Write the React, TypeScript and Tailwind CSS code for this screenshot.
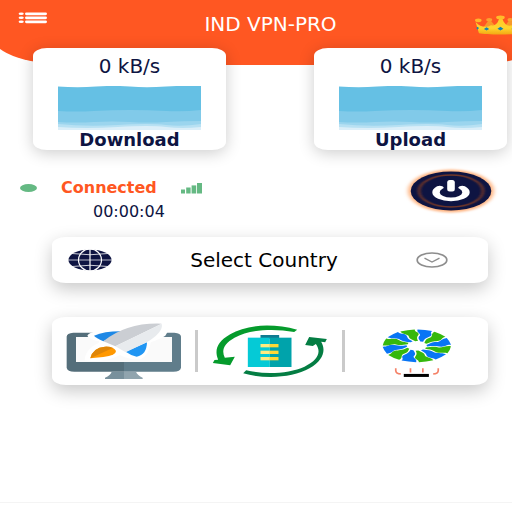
import type { ReactNode } from 'react';

const FONT = "font-['DejaVu_Sans',Verdana,sans-serif]";

function MenuIcon() {
  return (
    <svg viewBox="0 0 30 12" className="h-3 w-[30px]" fill="#fff">
      {[1.8, 5.8, 9.8].map((y) => (
        <g key={y}>
          <ellipse cx="3.2" cy={y} rx="2.6" ry="1.3" />
          <rect x="7" y={y - 1.4} width="22" height="2.8" rx="1.4" />
        </g>
      ))}
    </svg>
  );
}

function CrownIcon() {
  return (
    <svg viewBox="650 40 130 66" className="h-[22px] w-[43px]">
      <defs>
        <linearGradient id="gold" x1="0" y1="0" x2="0" y2="1">
          <stop offset="0" stopColor="#ffc928" />
          <stop offset="0.6" stopColor="#ffd42d" />
          <stop offset="1" stopColor="#f2a913" />
        </linearGradient>
      </defs>
      <path d="M684 82 L700 60 L718 82Z M746 82 L762 60 L780 82Z" fill="#f79a2b" stroke="#f79a2b" strokeWidth="6" />
      <ellipse cx="699" cy="57" rx="9" ry="5" fill="#fba12e" />
      <ellipse cx="763" cy="57" rx="9" ry="5" fill="#fba12e" />
      <path
        d="M658 64 C672 80 690 82 704 74 C716 76 724 70 729 54 L739 54 C744 70 754 78 766 74 C778 82 792 80 808 64 L800 98 C770 103 690 103 668 98 Z"
        fill="url(#gold)"
      />
      <ellipse cx="666" cy="59" rx="10" ry="6" fill="#ffb52b" />
      <ellipse cx="733" cy="50" rx="13" ry="6" fill="#ffbc2a" />
      <path d="M683 85 l8 -5 8 5 -8 5z M724 84 l9 -6 9 6 -9 6z M766 85 l8 -5 8 5 -8 5z M660 82 l4 -4 4 4 -4 5z" fill="#1583b5" />
    </svg>
  );
}

function WaveChart() {
  return (
    <svg viewBox="0 0 143 44" preserveAspectRatio="none" className="block h-11 w-full">
      <path d="M0 0.6 Q20 2 38 0.6 T72 0.6 T108 0.6 T143 0 V44 H0Z" fill="#65c0e4" />
      <path d="M0 25 Q18 26 36 25 T72 24 T108 25 T143 24 V44 H0Z" fill="#81cae9" />
      <path d="M0 36 Q18 37 36 36 T72 36 T108 36 T143 35 V44 H0Z" fill="#9bd5ee" />
      <path d="M0 38 Q28 41 60 39 T108 39 T143 38 V44 H0Z" fill="#b8e1f3" />
      <path d="M0 41 Q28 43 60 41 T108 41 T143 41 V44 H0Z" fill="#dceff9" />
    </svg>
  );
}

function SignalIcon() {
  return (
    <svg viewBox="0 0 21 11" className="h-[11px] w-[21px]" fill="#65b983">
      <rect x="0" y="6.5" width="4" height="4" />
      <rect x="5.2" y="4.5" width="4.4" height="6" />
      <rect x="10.6" y="2.4" width="4.6" height="8.1" />
      <rect x="16" y="0" width="5" height="10.5" />
    </svg>
  );
}

function PowerIcon() {
  return (
    <svg viewBox="0 0 98 50" className="block h-[50px] w-[98px]">
      <defs>
        <filter id="glow" x="-20%" y="-20%" width="140%" height="140%">
          <feGaussianBlur stdDeviation="2 1.3" />
        </filter>
        <filter id="ring">
          <feGaussianBlur stdDeviation="0.7 0.4" />
        </filter>
      </defs>
      <ellipse cx="49" cy="25" rx="43" ry="21.5" fill="#ffb480" filter="url(#glow)" />
      <ellipse cx="49" cy="25" rx="40.3" ry="19.5" fill="#0e1442" />
      <g transform="translate(49 25) scale(2 1)">
        <circle r="16" fill="none" stroke="#713628" strokeWidth="1.3" filter="url(#ring)" />
        <path d="M-5.6 -4.4 A7.5 7.1 0 1 0 5.6 -4.4" transform="translate(0 1)" fill="none" stroke="#fff" strokeWidth="3.7" strokeLinecap="round" />
      </g>
      <rect x="45.2" y="14" width="7.6" height="11.5" rx="2.5" fill="#fff" />
    </svg>
  );
}

function GlobeIcon() {
  return (
    <svg viewBox="0 0 44 22" className="h-[22px] w-11">
      <ellipse cx="22" cy="11" rx="21.6" ry="10.6" fill="#0e1442" />
      <g fill="none" stroke="#fff">
        <ellipse cx="22" cy="11" rx="11.5" ry="11" strokeWidth="1.2" />
        <path d="M22 0V22" strokeWidth="1.2" />
        <path d="M0 11H44" strokeWidth="0.7" />
        <path d="M4 4.5Q22 7 40 4.5M4 17.5Q22 15 40 17.5" strokeWidth="0.8" />
      </g>
    </svg>
  );
}

function ChevronIcon() {
  return (
    <svg viewBox="0 0 32 16" className="h-4 w-8" fill="none" stroke="#8d8d8d">
      <ellipse cx="16" cy="8" rx="14.8" ry="7" strokeWidth="1.7" />
      <path d="M8.5 6.2L16 10L23.5 6.2" strokeWidth="1.4" />
    </svg>
  );
}

function BoostIcon() {
  return (
    <svg viewBox="78 48 348 180" className="h-[60px] w-[116px]">
      <path d="M252 83H100Q80 84 80 95V188Q82 200 103 200H252Z" fill="#546e7a" />
      <path d="M252 83H403Q423 84 423 95V188Q421 200 400 200H252Z" fill="#607d8b" />
      <rect x="108" y="96" width="288" height="75" fill="#fafafa" />
      <path d="M215 200H252V222H195V218Q212 211 215 200Z" fill="#78909c" />
      <path d="M252 200H288Q292 211 308 218V222H252Z" fill="#90a4ae" />
      <path
        d="M142 92Q150 76 245 70Q315 42 380 50Q392 70 376 92Q360 102 332 112Q328 150 302 163Q270 166 240 150Q195 173 134 166Q134 140 160 122Q180 113 177 109Q145 102 142 92Z"
        fill="#fff"
      />
      <path d="M162 92Q195 78 248 79L190 109Q168 99 162 92Z" fill="#1e88e5" />
      <path d="M257 140L321 112Q320 150 290 155Q274 152 257 140Z" fill="#2196f3" />
      <path d="M190 109Q260 52 365 56L226 124Z" fill="#cbced3" />
      <path d="M226 124L365 56Q372 80 320 112L257 142Z" fill="#e8ebee" />
      <path d="M151 160Q158 128 195 125Q222 124 228 138Q228 152 190 156Z" fill="#ff9800" />
      <path d="M151 160Q158 128 195 125Q207 124 218 129Z" fill="#df8608" />
    </svg>
  );
}

function CleanIcon() {
  return (
    <svg viewBox="65 57 350 165" className="h-[55px] w-[117px]">
      <path
        d="M323 74L314 81C250 69 180 74 135 98C103 116 95 136 106 158L136 155L122 181L70 174L75 165L86 164C75 138 80 112 122 88C170 58 250 54 323 74Z"
        fill="#059b2c"
      />
      <path
        d="M161 205L170 196C230 210 300 205 345 185C387 165 396 140 379 117L370 123L347 120L359 96L412 102L407 112L395 110C410 135 402 165 360 190C310 219 225 223 161 205Z"
        fill="#047d43"
      />
      <rect x="213" y="90" width="56" height="12" fill="#0f7b91" />
      <rect x="175" y="98" width="66" height="88" fill="#05cad6" />
      <rect x="241" y="98" width="65" height="88" fill="#00a3ab" />
      {[117, 137, 156].map((y) => (
        <g key={y}>
          <rect x="213" y={y} width="28" height="10" fill="#ffec80" />
          <rect x="241" y={y} width="26" height="10" fill="#fdd835" />
        </g>
      ))}
    </svg>
  );
}

// one curved blade of the fan, pointing up before it is rotated
const BLADE = 'M1 -49 Q12 -48 22 -44 C18 -38 23 -35 20 -29 C16 -24 12 -24 9 -12 L5 -13 C3 -20 1 -24 4 -30 C7 -36 -1 -40 1 -49Z';

function CoolerIcon() {
  return (
    <svg viewBox="100 61 260 155" className="h-[52px] w-[87px]">
      <g transform="translate(231 123) scale(2.08 1)">
        {Array.from({ length: 12 }, (_, i) => (
          <path key={i} d={BLADE} transform={`rotate(${i * 30})`} fill={i % 2 ? '#36b80d' : '#0875f5'} />
        ))}
      </g>
      <g fill="none" stroke="#f58268" strokeWidth="5">
        <path d="M168 190V197Q169 207 183 207M295 190V197Q294 207 280 207" />
        <path d="M212 190V203M249 190V203" />
      </g>
      <rect x="192" y="207" width="75" height="9" fill="#000" />
    </svg>
  );
}

function SpeedCard({ label, speed }: { label: string; speed: string }) {
  return (
    <section className="rounded-[14px/8px] bg-white px-[25px] pt-1.5 text-center text-[#0e1442] shadow-[0_3px_16px_rgba(0,0,0,0.2)]">
      <p className="text-xl leading-6">{speed}</p>
      <div className="mt-2">
        <WaveChart />
      </div>
      <h2 className="text-lg leading-5 font-bold">{label}</h2>
    </section>
  );
}

function ToolButton({ label, children }: { label: string; children: ReactNode }) {
  return (
    <button type="button" aria-label={label} className="flex flex-1 justify-center">
      {children}
    </button>
  );
}

export default function App() {
  return (
    <div className={`relative overflow-hidden bg-white ${FONT}`}>
      {/* Header background, runs past both sides so the corners are cut */}
      <div className="absolute top-0 -right-[34px] -left-1.5 h-[65px] bg-[#ff5722] [border-radius:0_0_80px_80px/0_0_26px_26px]" />

      <header className="relative flex h-12 items-start justify-between pl-[18px]">
        <button type="button" aria-label="Menu" className="mt-3">
          <MenuIcon />
        </button>
        <h1 className="mt-3 pl-5 text-xl leading-6 text-white">IND VPN-PRO</h1>
        <button type="button" aria-label="Premium" className="mt-3.5 -mr-1">
          <CrownIcon />
        </button>
      </header>

      <main className="relative">
        <div className="mr-[5px] ml-[33px] grid grid-cols-2 gap-[88px]">
          <SpeedCard label="Download" speed="0 kB/s" />
          <SpeedCard label="Upload" speed="0 kB/s" />
        </div>

        {/* Status */}
        <div className="mt-4 mr-3 ml-5 flex items-start justify-between">
          <div className="pt-3">
            <div className="flex items-center">
              <span className="h-2 w-[17px] rounded-[50%] bg-[#65b983]" />
              <span className="ml-6 text-base leading-5 font-bold text-[#ff5722]">Connected</span>
              <span className="ml-6">
                <SignalIcon />
              </span>
            </div>
            <p className="mt-1 pl-9 text-center text-base leading-5 text-[#0e1442]">00:00:04</p>
          </div>
          <button type="button" aria-label="Disconnect">
            <PowerIcon />
          </button>
        </div>

        {/* Country */}
        <button
          type="button"
          className="mt-[15px] mr-6 ml-[52px] flex h-[46px] w-[calc(100%-76px)] items-center justify-between rounded-[14px/8px] bg-white pr-10 pl-4 shadow-[0_6px_18px_rgba(0,0,0,0.22)]"
        >
          <GlobeIcon />
          <span className="text-xl leading-6 text-black">Select Country</span>
          <ChevronIcon />
        </button>

        {/* Tools */}
        <nav className="mt-[34px] mr-6 ml-[52px] flex h-[68px] items-center rounded-[14px/8px] bg-white shadow-[0_6px_18px_rgba(0,0,0,0.22)]">
          <ToolButton label="Boost">
            <BoostIcon />
          </ToolButton>
          <span className="h-[42px] w-[3px] bg-[#cacaca]" />
          <ToolButton label="Clean">
            <CleanIcon />
          </ToolButton>
          <span className="h-[42px] w-[3px] bg-[#cacaca]" />
          <ToolButton label="Cool down">
            <CoolerIcon />
          </ToolButton>
        </nav>
      </main>

      <footer className="mt-[117px] h-2 border-t border-[#f4f4f4]" />
    </div>
  );
}
